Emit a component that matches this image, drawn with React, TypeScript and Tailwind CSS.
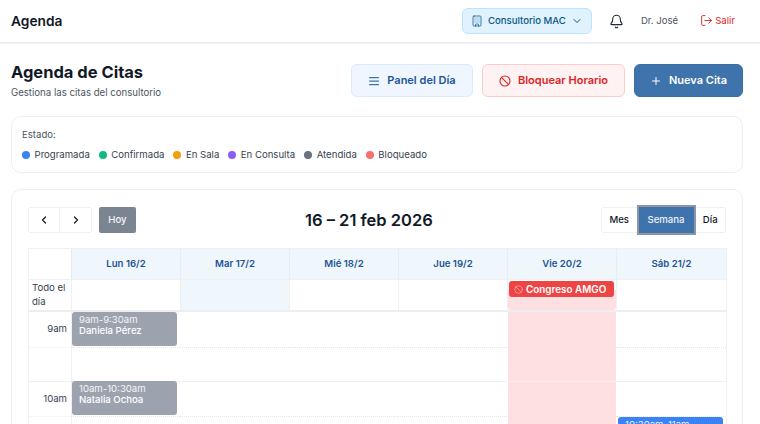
import { AlignJustify, Bell, Building, Ban, ChevronDown, ChevronLeft, ChevronRight, LogOut, Plus } from 'lucide-react';

const legend = [
  { label: 'Programada', color: 'bg-[#3b82f6]' },
  { label: 'Confirmada', color: 'bg-[#10b981]' },
  { label: 'En Sala', color: 'bg-[#f59e0b]' },
  { label: 'En Consulta', color: 'bg-[#8b5cf6]' },
  { label: 'Atendida', color: 'bg-[#6b7280]' },
  { label: 'Bloqueado', color: 'bg-[#f87171]' },
];

const days = ['Lun 16/2', 'Mar 17/2', 'Mié 18/2', 'Jue 19/2', 'Vie 20/2', 'Sáb 21/2'];
const slots = ['9am', '', '10am', ''];

function Appointment({ time, name, className }: { time: string; name: string; className: string }) {
  return (
    <div className={`absolute z-10 h-[33.5px] rounded-[3px] px-[7px] pt-[2px] text-[9.6px] leading-[11px] text-white ${className}`}>
      <div className="opacity-90">{time}</div>
      <div className="font-medium">{name}</div>
    </div>
  );
}

export default function App() {
  return (
    <div className="h-[424px] w-[760px] overflow-hidden bg-white text-[#111827] [font-family:Inter,sans-serif]">
      <header className="flex h-[44px] items-center justify-between border-b-2 border-[#eeeff1] pl-[11px] pr-[25px]">
        <h1 className="text-[13.75px] font-semibold">Agenda</h1>
        <div className="flex items-center">
          <button className="flex h-[26px] w-[130px] items-center whitespace-nowrap rounded-[6px] border border-[#bae6fd] bg-[#e0f2fe] pl-[8px] text-[9.6px] font-medium text-[#075985]">
            <Building size={12} strokeWidth={1.5} />
            <span className="ml-[5px]">Consultorio MAC</span>
            <ChevronDown size={12} className="ml-[5.5px]" />
          </button>
          <Bell size={15} strokeWidth={1.75} className="ml-[17px] text-[#1f2937]" />
          <span className="ml-[17px] text-[9.6px] text-[#4b5563]">Dr. José</span>
          <span className="ml-[22px] flex items-center gap-[2px] text-[9.6px] text-[#dc2626]">
            <LogOut size={13} strokeWidth={1.75} />
            Salir
          </span>
        </div>
      </header>

      <main className="pl-[11px] pr-[17px] pt-[20px]">
        <div className="flex h-[33px] items-start justify-between">
          <div>
            <h2 className="-mt-[2px] text-[16.5px] font-bold leading-[20px]">Agenda de Citas</h2>
            <p className="mt-[4px] text-[9.65px] leading-[14px] text-[#4b5563]">Gestiona las citas del consultorio</p>
          </div>
          <div className="flex gap-[9px] text-[11px] font-semibold">
            <button className="flex h-[33px] w-[122px] items-center justify-center gap-[7px] rounded-[6px] border border-[#dbeafe] bg-[#eff6ff] text-[#1c5596]">
              <AlignJustify size={12} strokeWidth={2.5} className="text-[#3f73ab]" />
              Panel del Día
            </button>
            <button className="flex h-[33px] w-[143px] items-center justify-center gap-[7px] rounded-[6px] border border-[#fecaca] bg-[#fef2f2] text-[#dc2626]">
              <Ban size={12} strokeWidth={2.25} />
              Bloquear Horario
            </button>
            <button className="flex h-[33px] w-[109px] items-center justify-center gap-[7px] rounded-[6px] border border-[#3a6ea5] bg-[#3f73ab] text-white">
              <Plus size={12} />
              Nueva Cita
            </button>
          </div>
        </div>

        <section className="mt-[19px] h-[57px] rounded-[10px] border border-[#eceef1] px-[10px] pt-[11px] text-[9.6px] leading-[14px]">
          <div className="text-[#4b5563]">Estado:</div>
          <div className="mt-[6px] flex gap-[9px] text-[#374151]">
            {legend.map((item) => (
              <span key={item.label} className="flex items-center gap-[4.5px]">
                <span className={`h-[8px] w-[8px] rounded-full ${item.color}`} />
                {item.label}
              </span>
            ))}
          </div>
        </section>

        <section className="mt-[16px] h-[300px] rounded-[10px] border border-[#eceef1] px-[16px] pt-[17px]">
          <div className="relative flex h-[26px] items-center justify-between">
            <div className="flex items-center gap-[7px]">
              <div className="flex h-[26px] w-[64px] rounded-[3px] border border-[#eef0f2] text-[#111827]">
                <span className="flex w-1/2 items-center justify-center border-r border-[#eef0f2]"><ChevronLeft size={12} strokeWidth={2.5} /></span>
                <span className="flex w-1/2 items-center justify-center"><ChevronRight size={12} strokeWidth={2.5} /></span>
              </div>
              <button className="h-[26px] w-[37px] rounded-[2px] bg-[#7b8592] text-[9.6px] font-medium text-[#f3f4f6]">Hoy</button>
            </div>
            <div className="absolute left-[277px] text-[16.5px] font-semibold">16 – 21 feb 2026</div>
            <div className="flex h-[26px] items-center rounded-[3px] border border-[#eef0f2] text-[9.6px] font-medium">
              <span className="w-[34.5px] text-center">Mes</span>
              <span className="flex h-[30px] w-[59px] items-center justify-center border-2 border-[#8a96a3] bg-[#3f73ab] text-[#eef2f7]">Semana</span>
              <span className="w-[29.5px] text-center">Día</span>
            </div>
          </div>

          <div className="mt-[15px] w-[699px] border-x border-[#eef0f2]">
            <div className="grid h-[32px] grid-cols-[42px_repeat(5,109px)_1fr] border-y border-[#eef0f2]">
              <div />
              {days.map((day) => (
                <div key={day} className="flex items-center justify-center border-l border-[#e6ecf3] bg-[#eff6fc] text-[9.6px] font-semibold text-[#1c5596]">
                  {day}
                </div>
              ))}
            </div>
            <div className="grid h-[32px] grid-cols-[42px_repeat(5,109px)_1fr] border-b-[2px] border-[#eceef1]">
              <div className="pl-[3px] pt-[1px] text-[9.6px] leading-[14px] text-[#374151]">Todo el día</div>
              {days.map((day, index) => (
                <div key={day} className={`relative border-l border-[#eef0f2] ${index === 1 ? 'bg-[#eff6fc]' : ''}`}>
                  {index === 4 ? (
                    <>
                      <div className="absolute inset-x-0 bottom-0 top-[10px] rounded-b-[3px] bg-[#fee0e3]" />
                      <div className="absolute left-[1px] right-[2px] top-[1px] flex h-[16px] items-center gap-[3px] rounded-[3px] bg-[#ef4444] pl-[5px] text-[9.9px] font-semibold text-white">
                        <Ban size={9} className="text-[#fca5a5]" />
                        Congreso AMGO
                      </div>
                    </>
                  ) : null}
                </div>
              ))}
            </div>
            <div className="grid grid-cols-[42px_repeat(5,109px)_1fr]">
              {slots.map((slot, row) => (
                <div key={row} className="contents">
                  <div className={`flex h-[34.5px] items-center justify-end pr-[4px] text-[9.6px] text-[#374151] ${row === 0 ? '' : 'border-t border-[#eef0f2]'} ${row % 2 ? 'border-dotted' : ''}`}>
                    {slot}
                  </div>
                  {days.map((day, col) => (
                    <div key={day} className={`relative h-[34.5px] ${row === 0 ? '' : 'border-t'} ${row % 2 ? 'border-dotted border-[#e5e7eb]' : 'border-[#eef0f2]'} ${col === 4 ? 'ml-px bg-[#fee0e3]' : ''}`}>
                      {col === 0 ? <div className="absolute inset-y-0 left-0 border-l border-[#eef0f2]" /> : null}
                      {col === 0 && row === 0 ? <Appointment time="9am-9:30am" name="Daniela Pérez" className="left-[1px] right-[3px] top-0 bg-[#9ca3af]" /> : null}
                      {col === 0 && row === 2 ? <Appointment time="10am-10:30am" name="Natalia Ochoa" className="left-[1px] right-[3px] -top-px bg-[#9ca3af]" /> : null}
                      {col === 5 && row === 3 ? <Appointment time="10:30am-11am" name="" className="left-[2px] right-[3px] top-0 bg-[#3b82f6]" /> : null}
                    </div>
                  ))}
                </div>
              ))}
            </div>
          </div>
        </section>
      </main>
    </div>
  );
}
